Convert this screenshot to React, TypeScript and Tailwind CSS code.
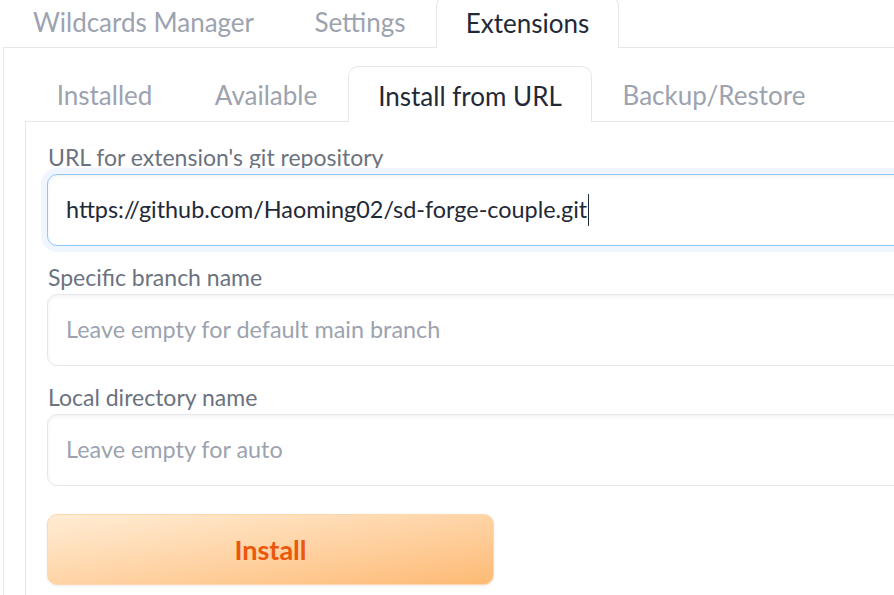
import React from "react";

const font = "font-['Lato','Noto_Sans',sans-serif]";

function Field({
  label,
  value,
  placeholder,
  focused,
}: {
  label: string;
  value?: string;
  placeholder?: string;
  focused?: boolean;
}) {
  return (
    <div className="flex flex-col">
      <div className="h-[30px] flex items-center pl-px text-[23px] text-[#6b7280] leading-none">{label}</div>
      <div
        className={
          "mt-[2px] h-[72px] w-[1000px] rounded-[10px] border bg-white flex items-center pl-[18px] text-[23.4px] leading-none " +
          (focused
            ? "border-[#93c5fd] shadow-[0_0_0_6px_#eff6ff,inset_0_2px_4px_rgba(0,0,0,0.05)]"
            : "border-[#e5e7eb] shadow-[inset_0_2px_4px_rgba(0,0,0,0.05)]")
        }
      >
        {value ? (
          <span className="flex items-center text-[#1f2937]">
            {value}
            <span className="ml-[1px] inline-block w-px h-[32px] bg-[#1f2937]" />
          </span>
        ) : (
          <span className="text-[#9ca3af]">{placeholder}</span>
        )}
      </div>
    </div>
  );
}

export default function App() {
  return (
    <div className={"w-[894px] h-[595px] overflow-hidden bg-white " + font}>
      <div className="w-[1200px]">
        {/* top tabs */}
        <div className="-mt-[4px] flex h-[52px] ml-[3px] text-[26px] leading-none">
          <div className="w-[281px] flex items-center justify-center border-b border-[#e5e7eb] text-[#9ca3af]">
            Wildcards Manager
          </div>
          <div className="w-[152px] flex items-center justify-center border-b border-[#e5e7eb] text-[#9ca3af]">
            Settings
          </div>
          <div className="w-[183px] flex items-center justify-center border-x border-t border-[#e5e7eb] rounded-t-[10px] bg-white text-[#1f2937]">
            Extensions
          </div>
          <div className="flex-1 border-b border-[#e5e7eb]" />
        </div>
        {/* outer panel */}
        <div className="ml-[3px] border-l border-[#e5e7eb] pl-[21px] pt-[18px]">
          {/* inner tabs */}
          <div className="flex h-[56px] text-[26px] leading-none">
            <div className="w-[159px] flex items-center justify-center pt-[2px] border-b border-[#e5e7eb] text-[#9ca3af]">
              Installed
            </div>
            <div className="w-[164px] flex items-center justify-center pt-[2px] border-b border-[#e5e7eb] text-[#9ca3af]">
              Available
            </div>
            <div className="w-[244px] flex items-center justify-center pt-[2px] border-x border-t border-[#e5e7eb] rounded-t-[10px] bg-white text-[#1f2937]">
              Install from URL
            </div>
            <div className="w-[244px] flex items-center justify-center pt-[2px] border-b border-[#e5e7eb] text-[#9ca3af]">
              Backup/Restore
            </div>
            <div className="flex-1 border-b border-[#e5e7eb]" />
          </div>
          {/* inner panel */}
          <div className="border-l border-[#e5e7eb] pl-[21px] pt-[20px] pb-[40px] flex flex-col gap-[16px]">
            <Field
              label="URL for extension's git repository"
              value="https://github.com/Haoming02/sd-forge-couple.git"
              focused
            />
            <Field label="Specific branch name" placeholder="Leave empty for default main branch" />
            <Field label="Local directory name" placeholder="Leave empty for auto" />
            <button className="mt-[12px] w-[447px] h-[71px] rounded-[10px] border border-[#fed7aa] bg-gradient-to-br from-[#ffedd5] to-[#fdba74] text-[#ea580c] font-bold text-[27px] leading-none shadow-[0_1px_3px_rgba(0,0,0,0.08)]">
              Install
            </button>
          </div>
        </div>
      </div>
    </div>
  );
}
